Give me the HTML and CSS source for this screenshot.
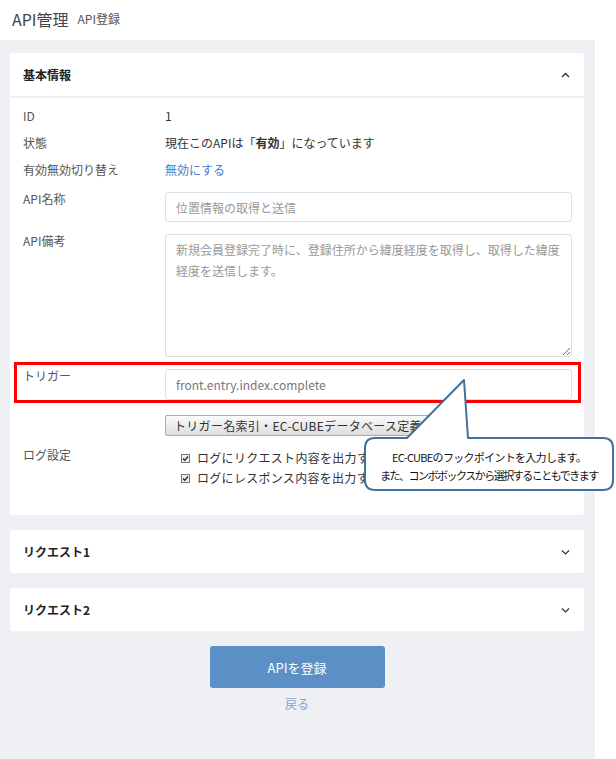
FILE: index.html
```html
<!DOCTYPE html>
<html lang="ja">
<head>
  <meta charset="UTF-8">
  <title>API登録</title>
  <link rel="stylesheet" href="styles.css">
</head>
<body>
  <header class="page-head">
    <span class="title">API管理</span>
    <span class="sub">API登録</span>
  </header>

  <main class="content">
    <section class="card">
      <div class="card-head">
        <span>基本情報</span>
        <svg class="chev" width="9" height="6" viewBox="0 0 9 6"><path d="M1 5 L4.5 1.5 L8 5" fill="none" stroke="#333" stroke-width="1.4"/></svg>
      </div>
      <div class="card-body">
        <div class="row"><div class="label">ID</div><div class="value">1</div></div>
        <div class="row"><div class="label">状態</div><div class="value">現在このAPIは「<b>有効</b>」になっています</div></div>
        <div class="row"><div class="label">有効無効切り替え</div><div class="value"><a class="link" href="#">無効にする</a></div></div>
        <div class="row field">
          <div class="label">API名称</div>
          <div class="value"><input class="input" type="text" placeholder="位置情報の取得と送信"></div>
        </div>
        <div class="row field">
          <div class="label">API備考</div>
          <div class="value"><textarea class="input area" placeholder="新規会員登録完了時に、登録住所から緯度経度を取得し、取得した緯度経度を送信します。"></textarea></div>
        </div>
        <div class="row field marked">
          <div class="label">トリガー</div>
          <div class="value"><input class="input trigger" type="text" value="front.entry.index.complete"></div>
        </div>
        <div class="row btn-row">
          <div class="label"></div>
          <div class="value"><button class="btn-sub" type="button">トリガー名索引・EC-CUBEデータベース定義</button></div>
        </div>
        <div class="row field">
          <div class="label">ログ設定</div>
          <div class="value">
            <div class="check">
              <svg width="9" height="9" viewBox="0 0 9 9"><rect x="0.5" y="0.5" width="8" height="8" fill="#eee" stroke="#777"/><path d="M2 4.5 L3.8 6.3 L7 2.5" fill="none" stroke="#222" stroke-width="1.3"/></svg>
              <span>ログにリクエスト内容を出力する</span>
            </div>
            <div class="check">
              <svg width="9" height="9" viewBox="0 0 9 9"><rect x="0.5" y="0.5" width="8" height="8" fill="#eee" stroke="#777"/><path d="M2 4.5 L3.8 6.3 L7 2.5" fill="none" stroke="#222" stroke-width="1.3"/></svg>
              <span>ログにレスポンス内容を出力する</span>
            </div>
          </div>
        </div>
      </div>
    </section>

    <section class="card">
      <div class="card-head">
        <span>リクエスト1</span>
        <svg class="chev" width="9" height="6" viewBox="0 0 9 6"><path d="M1 1.5 L4.5 5 L8 1.5" fill="none" stroke="#333" stroke-width="1.2"/></svg>
      </div>
    </section>

    <section class="card">
      <div class="card-head">
        <span>リクエスト2</span>
        <svg class="chev" width="9" height="6" viewBox="0 0 9 6"><path d="M1 1.5 L4.5 5 L8 1.5" fill="none" stroke="#333" stroke-width="1.2"/></svg>
      </div>
    </section>

    <div class="actions">
      <button class="btn-primary" type="button">APIを登録</button>
      <a class="back" href="#">戻る</a>
    </div>
  </main>

  <!-- annotation callout -->
  <div class="callout">
    <svg width="253" height="117" viewBox="0 0 253 117">
      <path d="M12 62 L44 62 L101 4 L105 62 L240 62 Q250 62 250 72 L250 104 Q250 114 240 114 L12 114 Q2 114 2 104 L2 72 Q2 62 12 62 Z" fill="#fff" stroke="#41719c" stroke-width="2" stroke-linejoin="round"/>
    </svg>
    <div class="callout-text">
      <div>EC-CUBEのフックポイントを入力します。</div>
      <div class="tight">また、コンボボックスから選択することもできます</div>
    </div>
  </div>
</body>
</html>
```

FILE: styles.css
```css
body { margin: 0; font-family: "Noto Sans CJK JP", "Noto Sans", sans-serif; font-size: 12px; color: #333; background: #fff; position: relative; }

.page-head { height: 40px; display: flex; align-items: center; gap: 9px; padding-left: 12px; box-sizing: border-box; padding-bottom: 3px; }
.page-head .title { font-size: 16px; color: #444; }
.page-head .sub { font-size: 12px; color: #555; }

.content { width: 595px; min-height: 719px; box-sizing: border-box; background: #eef0f4; padding: 13px 11px 40px 10px; }

.card { background: #fff; border-radius: 3px; margin-bottom: 15px; }
.card-head { height: 43px; display: flex; align-items: center; justify-content: space-between; padding: 0 14px 0 13px; font-weight: 700; color: #222; }
.card-body { border-top: 2px solid #eef0f4; padding: 8px 12px 27px 13px; display: flex; flex-direction: column; gap: 7px; }

.row { display: grid; grid-template-columns: 142px 1fr; line-height: 20px; }
.row .label { color: #555; }
.row.field { margin-top: 5px; }
.row.field .label { line-height: 14px; }
.row.btn-row { margin-top: 8px; }

.link { color: #437ec4; text-decoration: none; }

.input { display: block; width: 100%; height: 30px; box-sizing: border-box; border: 1px solid #dcdfe3; border-radius: 3px; padding: 0 10px; font-family: inherit; font-size: 12px; color: #555; background: #fff; margin: 0; }
.input::placeholder { color: #999; }
.area { height: 123px; padding: 4px 4px 4px 10px; line-height: 21px; resize: vertical; }
.trigger { color: #777; height: 31px; }

.marked { position: relative; }
.marked::before { content: ""; position: absolute; left: -9px; right: -9px; top: -7px; bottom: -3px; border: 3px solid #f00; }

.btn-sub { height: 21px; padding: 0 8px; border: 1px solid #aaa; border-radius: 2px; background: linear-gradient(#fbfbfb, #dedede); font-family: inherit; font-size: 12px; letter-spacing: 0.3px; color: #333; }

.check { display: flex; align-items: center; gap: 7px; padding-left: 16px; line-height: 20px; color: #333; letter-spacing: 0.3px; }

.actions { display: flex; flex-direction: column; align-items: center; margin-top: 1px; }
.btn-primary { width: 175px; height: 42px; border: 0; border-radius: 3px; background: #5b8fc5; color: #fff; font-family: inherit; font-size: 13px; }
.back { margin-top: 6px; line-height: 20px; color: #7ea6d3; text-decoration: none; font-size: 12px; }

.callout { position: absolute; left: 363px; top: 376px; width: 253px; height: 117px; }
.callout svg { display: block; }
.callout-text { position: absolute; left: 2px; width: 248px; top: 72px; text-align: center; font-size: 11px; line-height: 18px; letter-spacing: -0.7px; color: #111; }
.callout-text .tight { letter-spacing: -1.5px; }
```
